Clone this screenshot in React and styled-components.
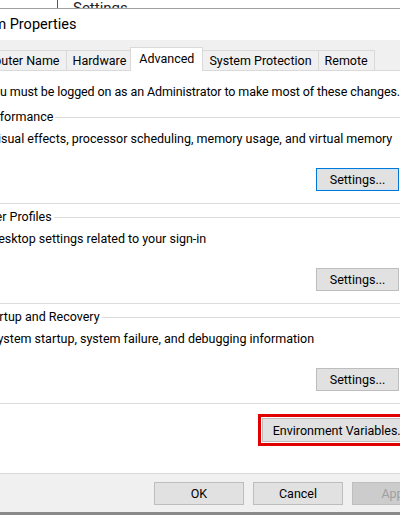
import styled, { createGlobalStyle, css } from "styled-components";

const GlobalStyle = createGlobalStyle`
  html, body {
    margin: 0;
    padding: 0;
    background: #ffffff;
    overflow: hidden;
  }
  body {
    font-family: Roboto, "Noto Sans", sans-serif;
    font-size: 12.5px;
    color: #000;
  }
`;

const tabs = ["Computer Name", "Hardware", "Advanced", "System Protection", "Remote"];

const groups = [
  {
    title: "Performance",
    text: "Visual effects, processor scheduling, memory usage, and virtual memory",
    focused: true,
  },
  {
    title: "User Profiles",
    text: "Desktop settings related to your sign-in",
  },
  {
    title: "Startup and Recovery",
    text: "System startup, system failure, and debugging information",
  },
];

const App = () => {
  return (
    <Screen>
      <GlobalStyle />
      {/* the window sitting behind the dialog */}
      <BackWindow>
        <BackDivider />
        <BackLabel>Settings</BackLabel>
      </BackWindow>

      <Window>
        <TitleBar>System Properties</TitleBar>
        <Body>
          <TabStrip>
            {tabs.map((t) => (
              <Tab key={t} $active={t === "Advanced"}>
                {t}
              </Tab>
            ))}
          </TabStrip>

          <Panel>
            <Notice>
              You must be logged on as an Administrator to make most of these changes.
            </Notice>

            {groups.map((g) => (
              <GroupBox key={g.title}>
                <Legend>{g.title}</Legend>
                <Description>{g.text}</Description>
                <ButtonRow>
                  <Button $focused={g.focused} $w={83}>
                    Settings...
                  </Button>
                </ButtonRow>
              </GroupBox>
            ))}

            <EnvRow>
              <Button $w={156} $marked>
                Environment Variables...
              </Button>
            </EnvRow>
          </Panel>

          <Footer>
            <Button $w={90}>OK</Button>
            <Button $w={90}>Cancel</Button>
            <Button $w={90} disabled>
              Apply
            </Button>
          </Footer>
        </Body>
      </Window>
    </Screen>
  );
};

const Screen = styled.div`
  width: 400px;
  height: 516px;
  overflow: hidden;
  background: #fff;
`;

const BackWindow = styled.div`
  height: 8px;
  overflow: hidden;
  display: flex;
  align-items: flex-start;
  background: #fff;
`;

const BackDivider = styled.div`
  width: 1px;
  height: 8px;
  margin-left: 57px;
  background: #555;
`;

const BackLabel = styled.span`
  margin-left: 15px;
  margin-top: -1px;
  font-size: 15px;
  line-height: 18px;
  color: #222;
`;

const Window = styled.div`
  margin-left: -44px;
  width: 500px;
  border-top: 1px solid #a0a0a0;
  border-bottom: 3px solid #8a8a8a;
  background: #f0f0f0;
`;

const TitleBar = styled.div`
  height: 31px;
  display: flex;
  align-items: center;
  padding-left: 2px;
  background: #fff;
  font-size: 14.5px;
`;

const Body = styled.div`
  padding: 0 3px 0 7px;
`;

const TabStrip = styled.div`
  height: 30px;
  display: flex;
  align-items: flex-end;
  margin-left: -2px;
`;

const Tab = styled.div`
  height: 20px;
  padding: 0 6px;
  display: flex;
  align-items: center;
  box-sizing: border-box;
  border: 1px solid #d9d9d9;
  border-bottom: none;
  margin-right: -1px;
  background: #f0f0f0;
  white-space: nowrap;

  ${(p) =>
    p.$active &&
    css`
      position: relative;
      z-index: 1;
      height: 24px;
      margin: 0 -1px -1px -2px;
      padding: 0 8px 2px;
      background: #fff;
    `}
`;

const Panel = styled.div`
  background: #fff;
  border: 1px solid #d9d9d9;
  padding: 13px 16px 31px;
`;

const Notice = styled.div`
  margin-left: 6px;
  line-height: 16px;
  letter-spacing: -0.1px;
  white-space: nowrap;
`;

const GroupBox = styled.fieldset`
  width: 428px;
  box-sizing: border-box;
  margin: 5px 0 0;
  min-width: 0;
  padding: 0 0 12px 9px;
  border: 1px solid #dcdcdc;

  &:first-of-type {
    margin-top: 9px;
  }
`;

const Legend = styled.legend`
  margin-left: -11px;
  padding: 0 2px;
  line-height: 16px;
`;

const Description = styled.div`
  margin-top: 6px;
  line-height: 16px;
  white-space: nowrap;
`;

const ButtonRow = styled.div`
  display: flex;
  justify-content: flex-end;
  margin: 21px 8px 0 0;
`;

const EnvRow = styled.div`
  width: 438px;
  display: flex;
  justify-content: flex-end;
  margin-top: 14px;

  & > button {
    height: 24px;
  }
`;

const Button = styled.button`
  width: ${(p) => p.$w}px;
  height: 23px;
  box-sizing: border-box;
  padding: 0;
  font-family: inherit;
  font-size: 12.5px;
  color: #000;
  background: #e1e1e1;
  border: 1px solid #bdbdbd;
  white-space: nowrap;
  overflow: hidden;

  ${(p) =>
    p.$focused &&
    css`
      border-color: #0078d7;
      box-shadow: inset 0 0 0 1px #cfe3f5;
    `}

  ${(p) =>
    p.$marked &&
    css`
      outline: 3px solid #e00000;
      outline-offset: 1px;
    `}

  &:disabled {
    background: #cccccc;
    border-color: #bfbfbf;
    color: #a0a0a0;
  }
`;

const Footer = styled.div`
  display: flex;
  justify-content: flex-end;
  gap: 9px;
  padding: 8px 11px 7px 0;
`;

export default App;
